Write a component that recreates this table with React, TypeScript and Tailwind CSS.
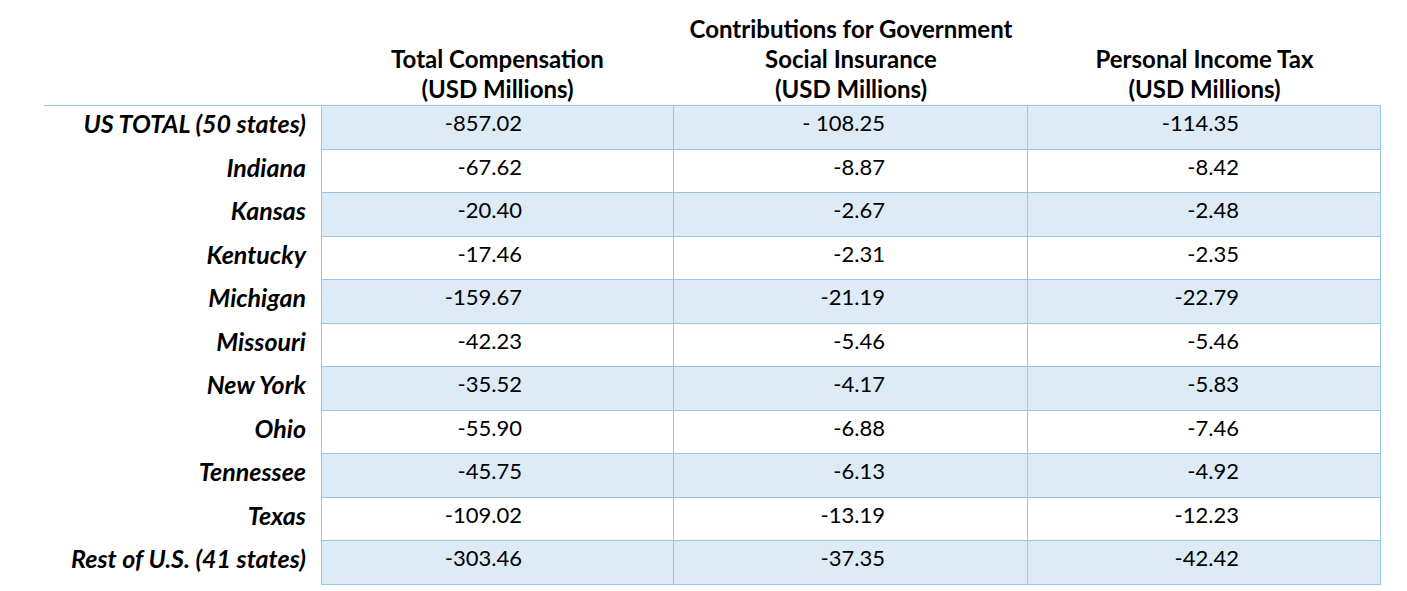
import clsx from "clsx"

type Row = {
  label: string
  comp: string
  social: string
  tax: string
}

const rows: Row[] = [
  { label: "US TOTAL (50 states)", comp: "-857.02", social: "- 108.25", tax: "-114.35" },
  { label: "Indiana", comp: "-67.62", social: "-8.87", tax: "-8.42" },
  { label: "Kansas", comp: "-20.40", social: "-2.67", tax: "-2.48" },
  { label: "Kentucky", comp: "-17.46", social: "-2.31", tax: "-2.35" },
  { label: "Michigan", comp: "-159.67", social: "-21.19", tax: "-22.79" },
  { label: "Missouri", comp: "-42.23", social: "-5.46", tax: "-5.46" },
  { label: "New York", comp: "-35.52", social: "-4.17", tax: "-5.83" },
  { label: "Ohio", comp: "-55.90", social: "-6.88", tax: "-7.46" },
  { label: "Tennessee", comp: "-45.75", social: "-6.13", tax: "-4.92" },
  { label: "Texas", comp: "-109.02", social: "-13.19", tax: "-12.23" },
  { label: "Rest of U.S. (41 states)", comp: "-303.46", social: "-37.35", tax: "-42.42" },
]

const cols = "grid grid-cols-[277px_353px_354px_353px]"

export default function App() {
  return (
    <div className="min-h-[591px] w-[1407px] bg-white pl-[44px] font-[Lato,sans-serif] text-[22px] text-black">
      <div
        className={clsx(
          cols,
          "h-[106px] w-[1337px] items-end border-b border-[#9dc3e6] pb-[1px] text-center text-[24px] font-bold leading-[30px]"
        )}
      >
        <div />
        <div>
          Total Compensation
          <br />
          (USD Millions)
        </div>
        <div>
          Contributions for Government
          <br />
          Social Insurance
          <br />
          (USD Millions)
        </div>
        <div>
          Personal Income Tax
          <br />
          (USD Millions)
        </div>
      </div>

      {rows.map((row, i) => {
        const fill = i % 2 === 0 ? "bg-[#ddebf7]" : "bg-white"
        return (
          <div key={row.label} className={clsx(cols, "h-[43.5px] w-[1337px] leading-[28px]")}>
            <div className="pt-[3px] pr-[15px] text-right text-[25px] font-bold italic">{row.label}</div>
            <div className={clsx(fill, "border-r border-b border-l border-[#9dc3e6] pt-[3px] pr-[151px] text-right")}>
              {row.comp}
            </div>
            <div className={clsx(fill, "border-r border-b border-[#9dc3e6] pt-[3px] pr-[142px] text-right")}>
              {row.social}
            </div>
            <div className={clsx(fill, "border-r border-b border-[#9dc3e6] pt-[3px] pr-[141px] text-right")}>
              {row.tax}
            </div>
          </div>
        )
      })}
    </div>
  )
}
